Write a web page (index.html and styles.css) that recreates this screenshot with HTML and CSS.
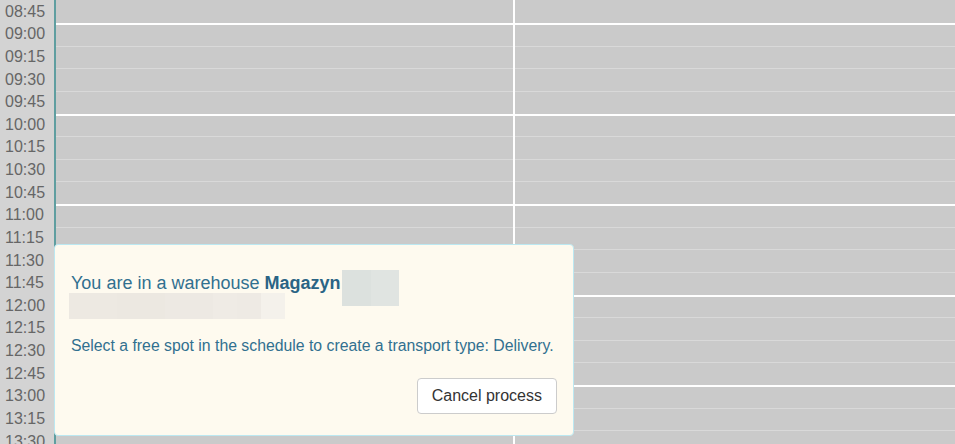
FILE: index.html
```html
<!DOCTYPE html>
<html>
<head>
<meta charset="utf-8">
<link rel="stylesheet" href="styles.css">
</head>
<body>
<div class="calendar">
  <div class="times">
    <div class="label">08:45</div>
    <div class="label">09:00</div>
    <div class="label">09:15</div>
    <div class="label">09:30</div>
    <div class="label">09:45</div>
    <div class="label">10:00</div>
    <div class="label">10:15</div>
    <div class="label">10:30</div>
    <div class="label">10:45</div>
    <div class="label">11:00</div>
    <div class="label">11:15</div>
    <div class="label">11:30</div>
    <div class="label">11:45</div>
    <div class="label">12:00</div>
    <div class="label">12:15</div>
    <div class="label">12:30</div>
    <div class="label">12:45</div>
    <div class="label">13:00</div>
    <div class="label">13:15</div>
    <div class="label">13:30</div>
    <div class="label">13:45</div>
  </div>
  <div class="day day-first">
    <div class="slot"></div>
    <div class="slot hour"></div><div class="slot"></div><div class="slot"></div><div class="slot"></div>
    <div class="slot hour"></div><div class="slot"></div><div class="slot"></div><div class="slot"></div>
    <div class="slot hour"></div><div class="slot"></div><div class="slot"></div><div class="slot"></div>
    <div class="slot hour"></div><div class="slot"></div><div class="slot"></div><div class="slot"></div>
    <div class="slot hour"></div><div class="slot"></div><div class="slot"></div><div class="slot"></div>
  </div>
  <div class="day day-second">
    <div class="slot"></div>
    <div class="slot hour"></div><div class="slot"></div><div class="slot"></div><div class="slot"></div>
    <div class="slot hour"></div><div class="slot"></div><div class="slot"></div><div class="slot"></div>
    <div class="slot hour"></div><div class="slot"></div><div class="slot"></div><div class="slot"></div>
    <div class="slot hour"></div><div class="slot"></div><div class="slot"></div><div class="slot"></div>
    <div class="slot hour"></div><div class="slot"></div><div class="slot"></div><div class="slot"></div>
  </div>
</div>

<div class="notice">
  <div class="notice-head">
    <p class="notice-title">You are in a warehouse <strong>Magazyn</strong></p>
    <span class="redact redact-a"></span>
  </div>
  <div class="redact redact-b"></div>
  <p class="notice-text">Select a free spot in the schedule to create a transport type: Delivery.</p>
  <div class="notice-actions">
    <button class="btn" type="button">Cancel process</button>
  </div>
</div>
</body>
</html>
```
FILE: styles.css
```css
html, body {
  margin: 0;
  padding: 0;
}
body {
  width: 955px;
  height: 444px;
  overflow: hidden;
  position: relative;
  font-family: "Liberation Sans", Arial, sans-serif;
  background: #cacaca;
}
.calendar {
  display: flex;
  height: 444px;
  overflow: hidden;
}
.times {
  width: 54px;
  flex: none;
  background: #d3d3d3;
  border-right: 2px solid #5f9ea0;
  padding-top: 0.375px;
}
.label {
  height: 22.625px;
  display: flex;
  align-items: center;
  padding-left: 5px;
  font-size: 16px;
  color: #666;
}
.day {
  background: #cacaca;
  padding-top: 0.375px;
}
.day-first {
  width: 457px;
  flex: none;
}
.day-second {
  flex: 1;
  border-left: 2px solid #fff;
}
.slot {
  height: 22.625px;
  box-sizing: border-box;
  border-top: 1px solid #d9d9d9;
}
.slot:first-child {
  border-top: none;
}
.slot.hour {
  border-top: 2px solid #fff;
}

.notice {
  position: absolute;
  left: 54px;
  top: 244px;
  width: 520px;
  box-sizing: border-box;
  background: #fefaef;
  border: 1px solid #bce8f1;
  border-radius: 4px;
  padding: 25px 16px 21px 16px;
  color: #31708f;
}
.notice-head {
  display: flex;
  align-items: flex-start;
}
.notice-title {
  margin: 0;
  font-size: 18px;
  line-height: 24px;
  margin-top: 1px;
}
.notice-title strong {
  color: #2a6485;
}
.redact {
  display: block;
}
.redact-a {
  width: 57px;
  height: 36px;
  margin-left: 1px;
  background: linear-gradient(to right, #dce1de 0, #dce1de 29px, #e0e4e1 29px);
}
.redact-b {
  width: 216px;
  height: 26px;
  margin-top: -13px;
  margin-left: -2px;
  background: linear-gradient(to right,
    #ede9e2 0, #ede9e2 48px,
    #ece8e1 48px, #ece8e1 96px,
    #ede9e3 96px, #ede9e3 144px,
    #efebe5 144px, #efebe5 168px,
    #eeeae4 168px, #eeeae4 192px,
    #f4f1eb 192px);
}
.notice-text {
  margin: 17px 0 0 0;
  font-size: 15.8px;
  line-height: 20px;
  white-space: nowrap;
}
.notice-actions {
  display: flex;
  justify-content: flex-end;
  margin-top: 22px;
}
.btn {
  font-family: "Liberation Sans", Arial, sans-serif;
  font-size: 16px;
  line-height: 18px;
  color: #333;
  background: #fff;
  border: 1px solid #ccc;
  border-radius: 4px;
  padding: 8px 14px;
  height: 36px;
  box-sizing: border-box;
}
```
